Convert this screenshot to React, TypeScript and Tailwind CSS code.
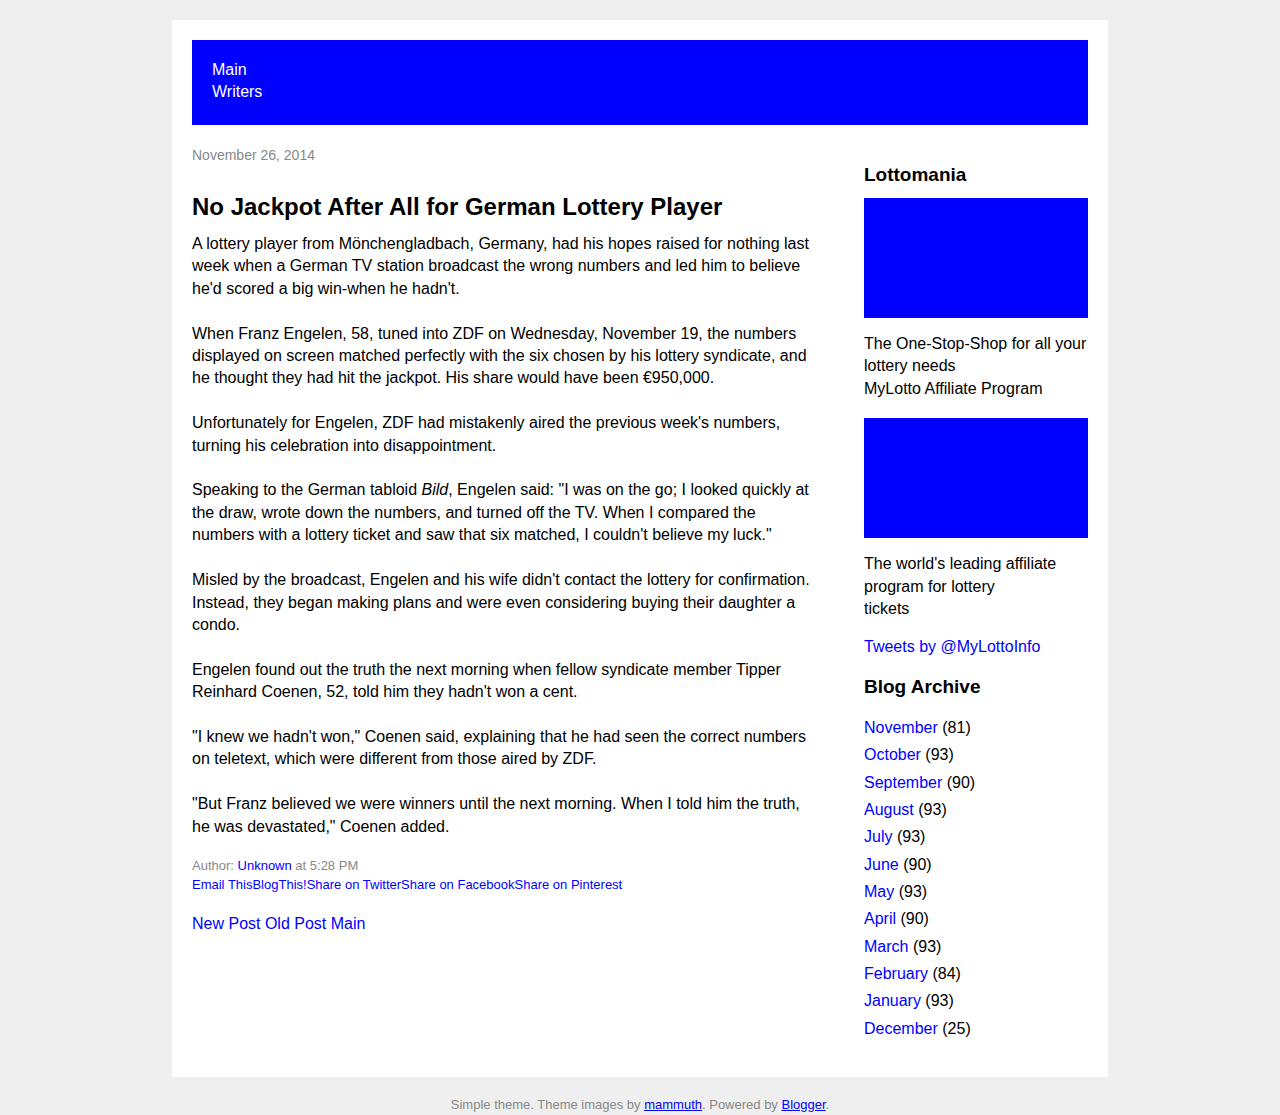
const archive: [string, number][] = [
  ['November', 81],
  ['October', 93],
  ['September', 90],
  ['August', 93],
  ['July', 93],
  ['June', 90],
  ['May', 93],
  ['April', 90],
  ['March', 93],
  ['February', 84],
  ['January', 93],
  ['December', 25],
];

export default function App() {
  return (
    <div className="min-h-[1115px] bg-[#efefef] pt-5 font-['Liberation_Sans',Arial,sans-serif] text-black">
      <div className="mx-auto w-[936px] bg-white px-5 pt-5 pb-[35px]">
        <div className="h-[85px] bg-[#0000ff] px-5 pt-[19px] text-[16px] leading-[22px] text-white">
          <div>Main</div>
          <div>Writers</div>
        </div>

        <div className="mt-[22px] flex">
          <div className="w-[622px]">
            <div className="text-[14px] leading-[16px] text-[#888]">November 26, 2014</div>
            <h3 className="mt-[30px] text-[24px] font-bold leading-[28px]">
              No Jackpot After All for German Lottery Player
            </h3>
            <div className="mt-[12px] text-[16px] leading-[22.4px]">
              A lottery player from Mönchengladbach, Germany, had his hopes raised for nothing last week when a German TV station broadcast the wrong numbers and led him to believe he'd scored a big win-when he hadn't.
              <br />
              <br />
              When Franz Engelen, 58, tuned into ZDF on Wednesday, November 19, the numbers displayed on screen matched perfectly with the six chosen by his lottery syndicate, and he thought they had hit the jackpot. His share would have been €950,000.
              <br />
              <br />
              Unfortunately for Engelen, ZDF had mistakenly aired the previous week's numbers, turning his celebration into disappointment.
              <br />
              <br />
              Speaking to the German tabloid <i>Bild</i>, Engelen said: "I was on the go; I looked quickly at the draw, wrote down the numbers, and turned off the TV. When I compared the numbers with a lottery ticket and saw that six matched, I couldn't believe my luck."
              <br />
              <br />
              Misled by the broadcast, Engelen and his wife didn't contact the lottery for confirmation. Instead, they began making plans and were even considering buying their daughter a condo.
              <br />
              <br />
              Engelen found out the truth the next morning when fellow syndicate member Tipper Reinhard Coenen, 52, told him they hadn't won a cent.
              <br />
              <br />
              "I knew we hadn't won," Coenen said, explaining that he had seen the correct numbers on teletext, which were different from those aired by ZDF.
              <br />
              <br />
              "But Franz believed we were winners until the next morning. When I told him the truth, he was devastated," Coenen added.
            </div>
            <div className="mt-[18px] text-[13px] leading-[19px] text-[#888]">
              Author: <a className="text-[#0000ff]">Unknown</a> at 5:28 PM
            </div>
            <div className="text-[13px] leading-[19px] text-[#0000ff]">
              <a>Email This</a>
              <a>BlogThis!</a>
              <a>Share on Twitter</a>
              <a>Share on Facebook</a>
              <a>Share on Pinterest</a>
            </div>
            <div className="mt-[19px] text-[16px] leading-[22px] text-[#0000ff]">
              <a>New Post</a> <a>Old Post</a> <a>Main</a>
            </div>
          </div>

          <div className="ml-auto w-[224px] pt-[17px] text-[16px] leading-[22.4px]">
            <h2 className="text-[19px] font-bold leading-[22px]">Lottomania</h2>
            <div className="mt-[12px] h-[120px] bg-[#0000ff]" />
            <div className="mt-[15px]">
              The One-Stop-Shop for all your lottery needs
              <br />
              MyLotto Affiliate Program
            </div>
            <div className="mt-[18px] h-[120px] bg-[#0000ff]" />
            <div className="mt-[15px] w-[200px]">
              The world's leading affiliate program for lottery
              <br />
              tickets
            </div>
            <div className="mt-[16px] text-[#0000ff]">Tweets by @MyLottoInfo</div>
            <h2 className="mt-[17px] text-[19px] font-bold leading-[22px]">Blog Archive</h2>
            <ul className="mt-[16px] leading-[27.36px]">
              {archive.map(([m, n]) => (
                <li key={m}>
                  <a className="text-[#0000ff]">{m}</a> ({n})
                </li>
              ))}
            </ul>
          </div>
        </div>
      </div>

      <div className="mt-[20px] pb-2 text-center text-[13px] leading-[15px] text-[#888]">
        Simple theme. Theme images by <a className="text-[#0000ff] underline">mammuth</a>. Powered by{' '}
        <a className="text-[#0000ff] underline">Blogger</a>.
      </div>
    </div>
  );
}
